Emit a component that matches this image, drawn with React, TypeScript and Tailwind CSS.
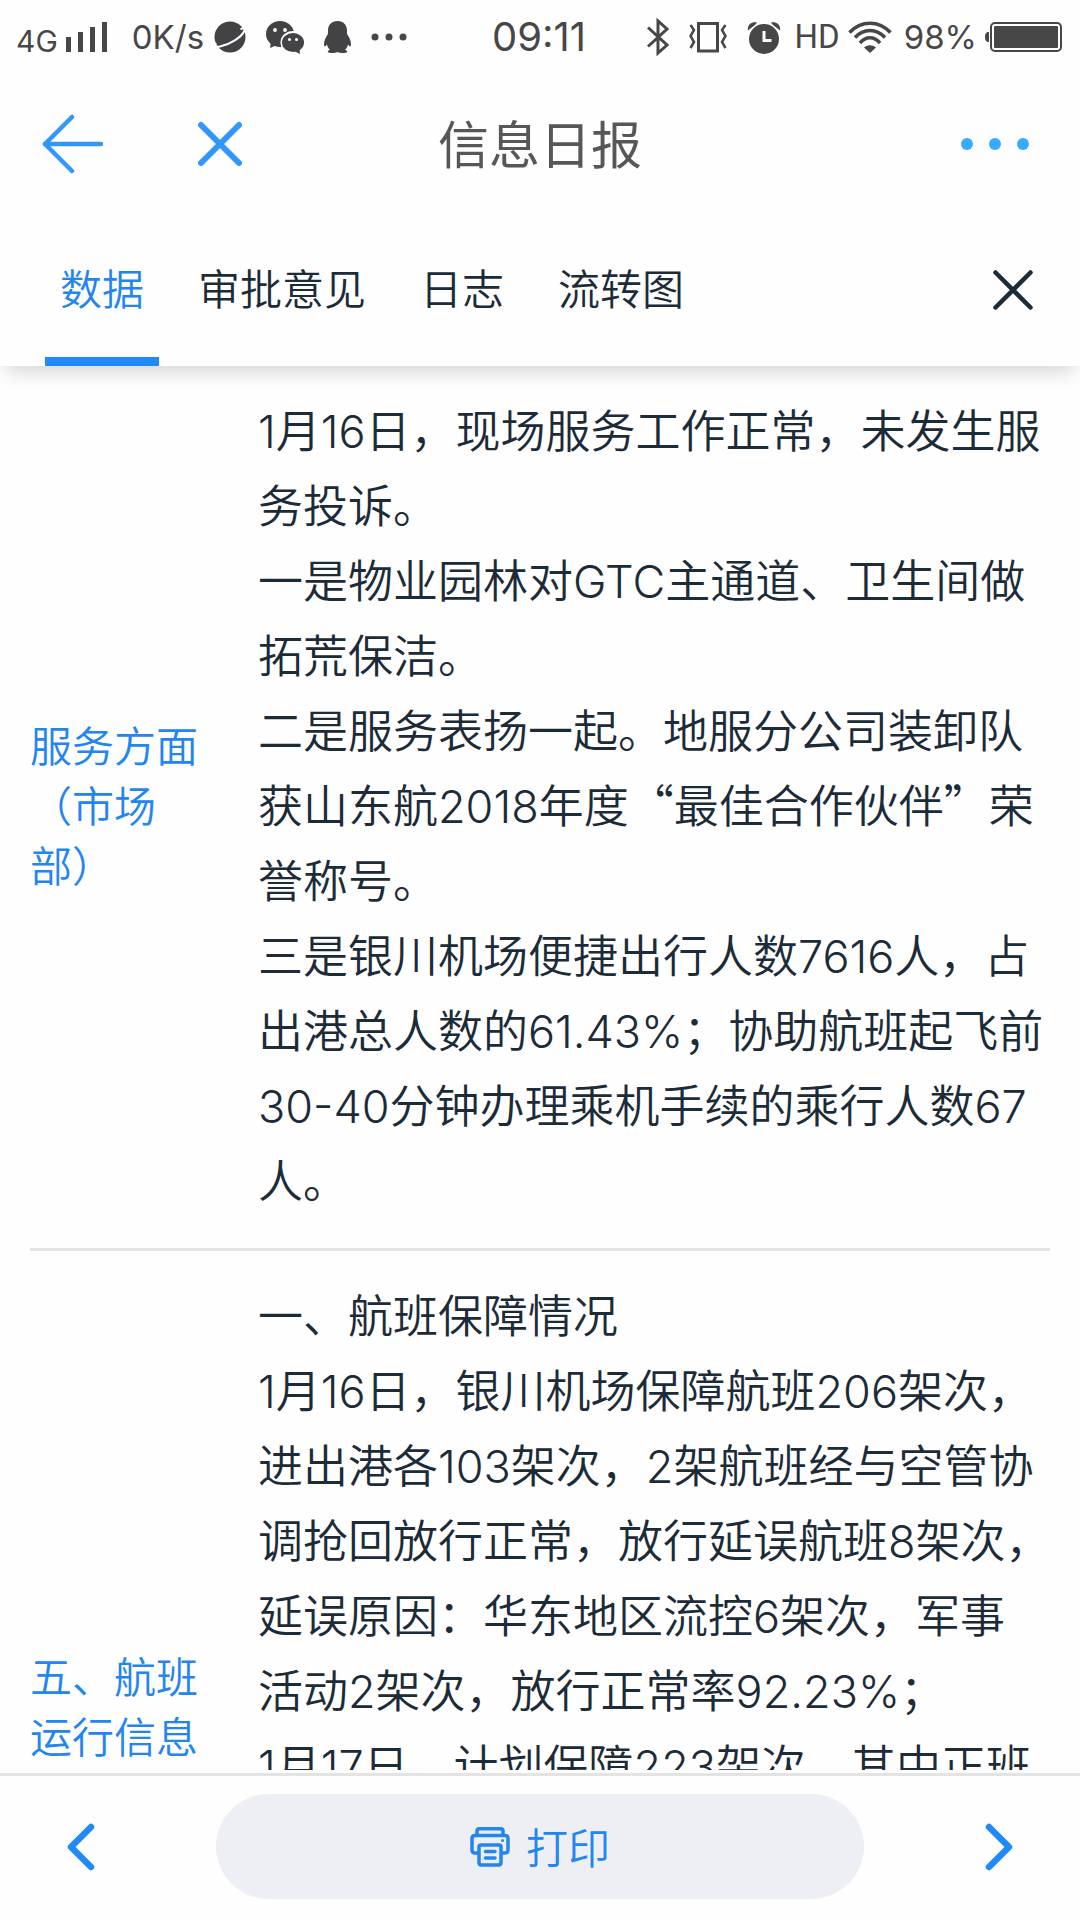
import { useState } from "react";

const TABS = ["数据", "审批意见", "日志", "流转图"];

interface ReportRowProps {
  label: string;
  children: React.ReactNode;
  className?: string;
}

function PlanetIcon() {
  return (
    <svg className="h-8 w-8" viewBox="0 0 32 32">
      <circle cx="16" cy="16" r="15.5" fill="#434345" />
      <path
        d="M26.5 8.5C29.5 6.5 31.5 7 30 10.500C27.500 16 16 23.500 6 25.500C1.500 26.300 0 25 2 22"
        fill="none"
        stroke="#fff"
        strokeWidth="2"
      />
    </svg>
  );
}

function WechatIcon() {
  return (
    <svg className="h-[33px] w-[38px]" viewBox="0 0 38 33">
      <g fill="#434345">
        <ellipse cx="14" cy="13" rx="14" ry="13" />
        <path d="M5 21L4 27L11 24Z" />
      </g>
      <ellipse cx="27" cy="21.500" rx="12.500" ry="11.500" fill="#fff" />
      <g fill="#434345">
        <ellipse cx="27" cy="21.500" rx="11" ry="9.500" />
        <path d="M28 30L34 33L33.500 27Z" />
      </g>
      <g fill="#fff">
        <circle cx="9" cy="9" r="1.900" />
        <circle cx="19" cy="9" r="1.900" />
        <circle cx="23.500" cy="18.500" r="1.500" />
        <circle cx="30.500" cy="18.500" r="1.500" />
      </g>
    </svg>
  );
}

function PenguinIcon() {
  return (
    <svg className="h-8 w-[27px]" viewBox="0 0 27 32" fill="#434345">
      <path d="M13.500 0C7.500 0 4 4 4 9.500V13C2 16 0 19.500 0 23C0 25.500 .8 26.500 3 23.500C3.500 26 4.500 27.500 6 28.800C4 29.500 3.500 30.500 4 31.300C5.500 32.300 11.500 32.200 13.500 31C15.500 32.200 21.500 32.300 23 31.300C23.500 30.500 23 29.500 21 28.800C22.500 27.500 23.500 26 24 23.500C26.200 26.500 27 25.500 27 23C27 19.500 25 16 23 13V9.500C23 4 19.500 0 13.500 0Z" />
    </svg>
  );
}

function VibrateIcon() {
  return (
    <svg className="h-8 w-[38px]" viewBox="0 0 38 32" fill="none" stroke="#474747" strokeWidth="3">
      <path d="M9.500 2.500H28.500V30H9.500Z" />
      <path d="M1.500 4L5 9L1.500 15L5 21L1.500 27" strokeWidth="2.500" />
      <path d="M36.500 4L33 9L36.500 15L33 21L36.500 27" strokeWidth="2.500" />
    </svg>
  );
}

function AlarmIcon() {
  return (
    <svg className="h-[33px] w-[34px]" viewBox="0 0 34 33">
      <circle cx="17" cy="18" r="15" fill="#474747" />
      <path d="M17 10V19.500H24.500" fill="none" stroke="#fff" strokeWidth="3" />
      <path d="M1 9.500C0 4 4.500 .5 10 1.500L8 4L3.500 7.500ZM33 9.500C34 4 29.500 .5 24 1.500L26 4L30.500 7.500Z" fill="#474747" />
    </svg>
  );
}

function WifiIcon() {
  return (
    <svg className="h-8 w-11" viewBox="0 0 44 32" fill="none" stroke="#474747" strokeWidth="3.500">
      <path d="M1.500 11.500C13 -1 31 -1 42.500 11.500" />
      <path d="M7 16.500C15.500 7 28.500 7 37 16.500" />
      <path d="M12 22C18 15 26 15 32 22" />
      <path d="M16 26.500C20 23.500 24 23.500 28 26.500L22 32Z" fill="#474747" stroke="none" />
    </svg>
  );
}

function StatusBar() {
  return (
    <div className="grid h-[74px] grid-cols-[1fr_auto_1fr] items-center pl-4 pr-[18px] font-[Inter,'Liberation_Sans',sans-serif] text-[#474747]">
      <div className="flex items-center">
        <span className="mt-2 text-[30px] leading-9">4G</span>
        <svg className="ml-2 h-[30px] w-[42px]" viewBox="0 0 42 30" fill="#474747">
          <path d="M0 15H5V30H0ZM12 10H17V30H12ZM24 5H29V30H24ZM36 0H41V30H36Z" />
        </svg>
        <span className="ml-6 text-[33px] leading-9">0K/s</span>
        <span className="ml-2.5 flex items-center gap-5">
          <PlanetIcon />
          <WechatIcon />
          <PenguinIcon />
          <svg className="h-2 w-9" viewBox="0 0 36 8" fill="#474747">
            <circle cx="4" cy="4" r="3.500" />
            <circle cx="18" cy="4" r="3.500" />
            <circle cx="32" cy="4" r="3.500" />
          </svg>
        </span>
      </div>
      <span className="text-[40px] leading-10">09:11</span>
      <div className="flex items-center justify-end">
        <svg className="h-[38px] w-[22px]" viewBox="0 0 22 38" fill="none" stroke="#474747" strokeWidth="3">
          <path d="M1 9.500L20 27L11 35V3L20 11L1 28.500" />
        </svg>
        <span className="ml-5 flex items-center gap-5">
          <VibrateIcon />
          <AlarmIcon />
        </span>
        <span className="ml-3.5 font-[Roboto,sans-serif] text-[33px] leading-9">HD</span>
        <span className="ml-2">
          <WifiIcon />
        </span>
        <span className="ml-3 text-[33px] leading-9">98%</span>
        <svg className="ml-2 h-[30px] w-[77px]" viewBox="0 0 77 30">
          <path d="M4 10C1 10 0 12 0 15C0 18 1 20 4 20Z" fill="#474747" />
          <rect x="6" y="1" width="70" height="28" rx="4" fill="none" stroke="#474747" strokeWidth="2" />
          <rect x="9" y="4" width="64" height="22" rx="1" fill="#474747" />
        </svg>
      </div>
    </div>
  );
}

function TitleBar() {
  return (
    <header className="grid h-[140px] grid-cols-[1fr_auto_1fr] items-center px-10">
      <div className="flex items-center gap-[92px]">
        <button type="button" aria-label="返回">
          <svg className="h-[60px] w-16" viewBox="0 0 64 60" fill="none" stroke="#3296fa" strokeWidth="4.500" strokeLinecap="round">
            <path d="M32 3L5 30L32 57" strokeLinejoin="round" />
            <path d="M5 30H61" />
          </svg>
        </button>
        <button type="button" aria-label="关闭">
          <svg className="h-12 w-12" viewBox="0 0 48 48" stroke="#3296fa" strokeWidth="6" strokeLinecap="round">
            <path d="M5 5L43 43M43 5L5 43" />
          </svg>
        </button>
      </div>
      <h1 className="pt-1 text-[51px] leading-[60px] text-[#555758]">信息日报</h1>
      <button type="button" aria-label="更多" className="justify-self-end">
        <svg className="h-3 w-20" viewBox="0 0 80 12" fill="#38aaff">
          <circle cx="7" cy="6" r="6" />
          <circle cx="35" cy="6" r="6" />
          <circle cx="63" cy="6" r="6" />
        </svg>
      </button>
    </header>
  );
}

function PrinterIcon() {
  return (
    <svg className="h-10 w-10" viewBox="0 0 40 40" fill="none" stroke="#2385f0" strokeWidth="3.500" strokeLinecap="round" strokeLinejoin="round">
      <path d="M7 8V4Q7 1.700 9.500 1.700H30.500Q33 1.700 33 4V8" />
      <path d="M8 26H5Q2 26 2 23V11.500Q2 8.500 5 8.500H35Q38 8.500 38 11.500V23Q38 26 35 26H32" />
      <path d="M9 20Q9 18 11 18H29Q31 18 31 20V35.500Q31 38 28.500 38H11.500Q9 38 9 35.500Z" />
      <path d="M15.500 24.500H25M15.500 31H25" />
      <circle cx="32.500" cy="13.500" r="1.500" fill="#2385f0" stroke="none" />
    </svg>
  );
}

function ReportRow({ label, children, className = "" }: ReportRowProps) {
  return (
    <section className={`mx-[30px] flex items-center border-b-3 border-[#e3e3e3] pt-7 pb-[29px] ${className}`}>
      <h2 className="w-[174px] shrink-0 text-[42px] leading-[60px] font-[350] text-[#2385f0]">{label}</h2>
      <div className="-mr-2 ml-[54px] min-w-0 flex-1 text-[45px] leading-[75px] font-[350] text-[#1c2b38]">{children}</div>
    </section>
  );
}

export default function App() {
  const [active, setActive] = useState(0);

  return (
    <div className="flex h-screen flex-col overflow-hidden bg-[#fefefe] font-[Inter,'Noto_Sans_CJK_SC',sans-serif]">
      <StatusBar />
      <TitleBar />

      <nav className="relative z-10 flex h-[152px] shrink-0 items-stretch justify-between bg-[#fefefe] pl-[45px] pr-[42px] shadow-[0_12px_18px_-6px_rgba(0,0,0,0.16)]">
        <div className="flex gap-6">
          {TABS.map((tab, i) => (
            <button
              key={tab}
              type="button"
              onClick={() => setActive(i)}
              className={`border-b-9 px-[15px] pt-2 text-[42px] leading-[60px] font-[350] ${
                i === active ? "border-[#2189f8] text-[#2385f0]" : "border-transparent text-[#1c2b38]"
              }`}
            >
              {tab}
            </button>
          ))}
        </div>
        <button type="button" aria-label="关闭面板">
          <svg className="h-[50px] w-[50px]" viewBox="0 0 50 50" stroke="#1c2b38" strokeWidth="4.500" strokeLinecap="round">
            <path d="M7.500 7.500L42.500 42.500M42.500 7.500L7.500 42.500" />
          </svg>
        </button>
      </nav>

      <main className="min-h-0 flex-1 overflow-hidden">
        <ReportRow label="服务方面（市场部）">
          <p>1月16日，现场服务工作正常，未发生服务投诉。</p>
          <p>一是物业园林对GTC主通道、卫生间做拓荒保洁。</p>
          <p>
            二是服务表扬一起。地服分公司装卸队获山东航2018年度
            <span className="font-['Noto_Sans_CJK_SC',sans-serif] leading-none">“</span>最佳合作伙伴
            <span className="font-['Noto_Sans_CJK_SC',sans-serif] leading-none">”</span>荣誉称号。
          </p>
          <p>三是银川机场便捷出行人数7616人，占出港总人数的61.43%；协助航班起飞前30-40分钟办理乘机手续的乘行人数67人。</p>
        </ReportRow>
        <ReportRow label="五、航班运行信息" className="min-h-[918px]">
          <div className="min-h-[858px]">
            <p>一、航班保障情况</p>
            <p>
              1月16日，银川机场保障航班206架次，进出港各103架次，2架航班经与空管协调抢回放行正常，放行延误航班8架次，延误原因：华东地区流控6架次，军事
              <br />
              活动2架次，放行正常率92.23%；
            </p>
            <p>1月17日，计划保障223架次，其中正班</p>
          </div>
        </ReportRow>
      </main>

      <footer className="mt-[3px] grid h-[147px] shrink-0 grid-cols-[1fr_3fr_1fr] items-center border-t-3 border-[#e3e3e3] pb-[3px]">
        <button type="button" aria-label="上一条" className="ml-[59px] justify-self-start">
          <svg className="h-[50px] w-[50px]" viewBox="0 0 50 50" fill="none" stroke="#2189f8" strokeWidth="6.500" strokeLinecap="round" strokeLinejoin="round">
            <path d="M32 5L12 25L32 45" />
          </svg>
        </button>
        <button type="button" className="flex h-[105px] items-center justify-center gap-4 rounded-full bg-[#eeeff5] text-[42px] leading-[60px] font-[350] text-[#2385f0]">
          <PrinterIcon />
          <span className="pt-1">打印</span>
        </button>
        <button type="button" aria-label="下一条" className="mr-[47px] justify-self-end">
          <svg className="h-[50px] w-[50px]" viewBox="0 0 50 50" fill="none" stroke="#2189f8" strokeWidth="6.500" strokeLinecap="round" strokeLinejoin="round">
            <path d="M6 5L26 25L6 45" />
          </svg>
        </button>
      </footer>
    </div>
  );
}
